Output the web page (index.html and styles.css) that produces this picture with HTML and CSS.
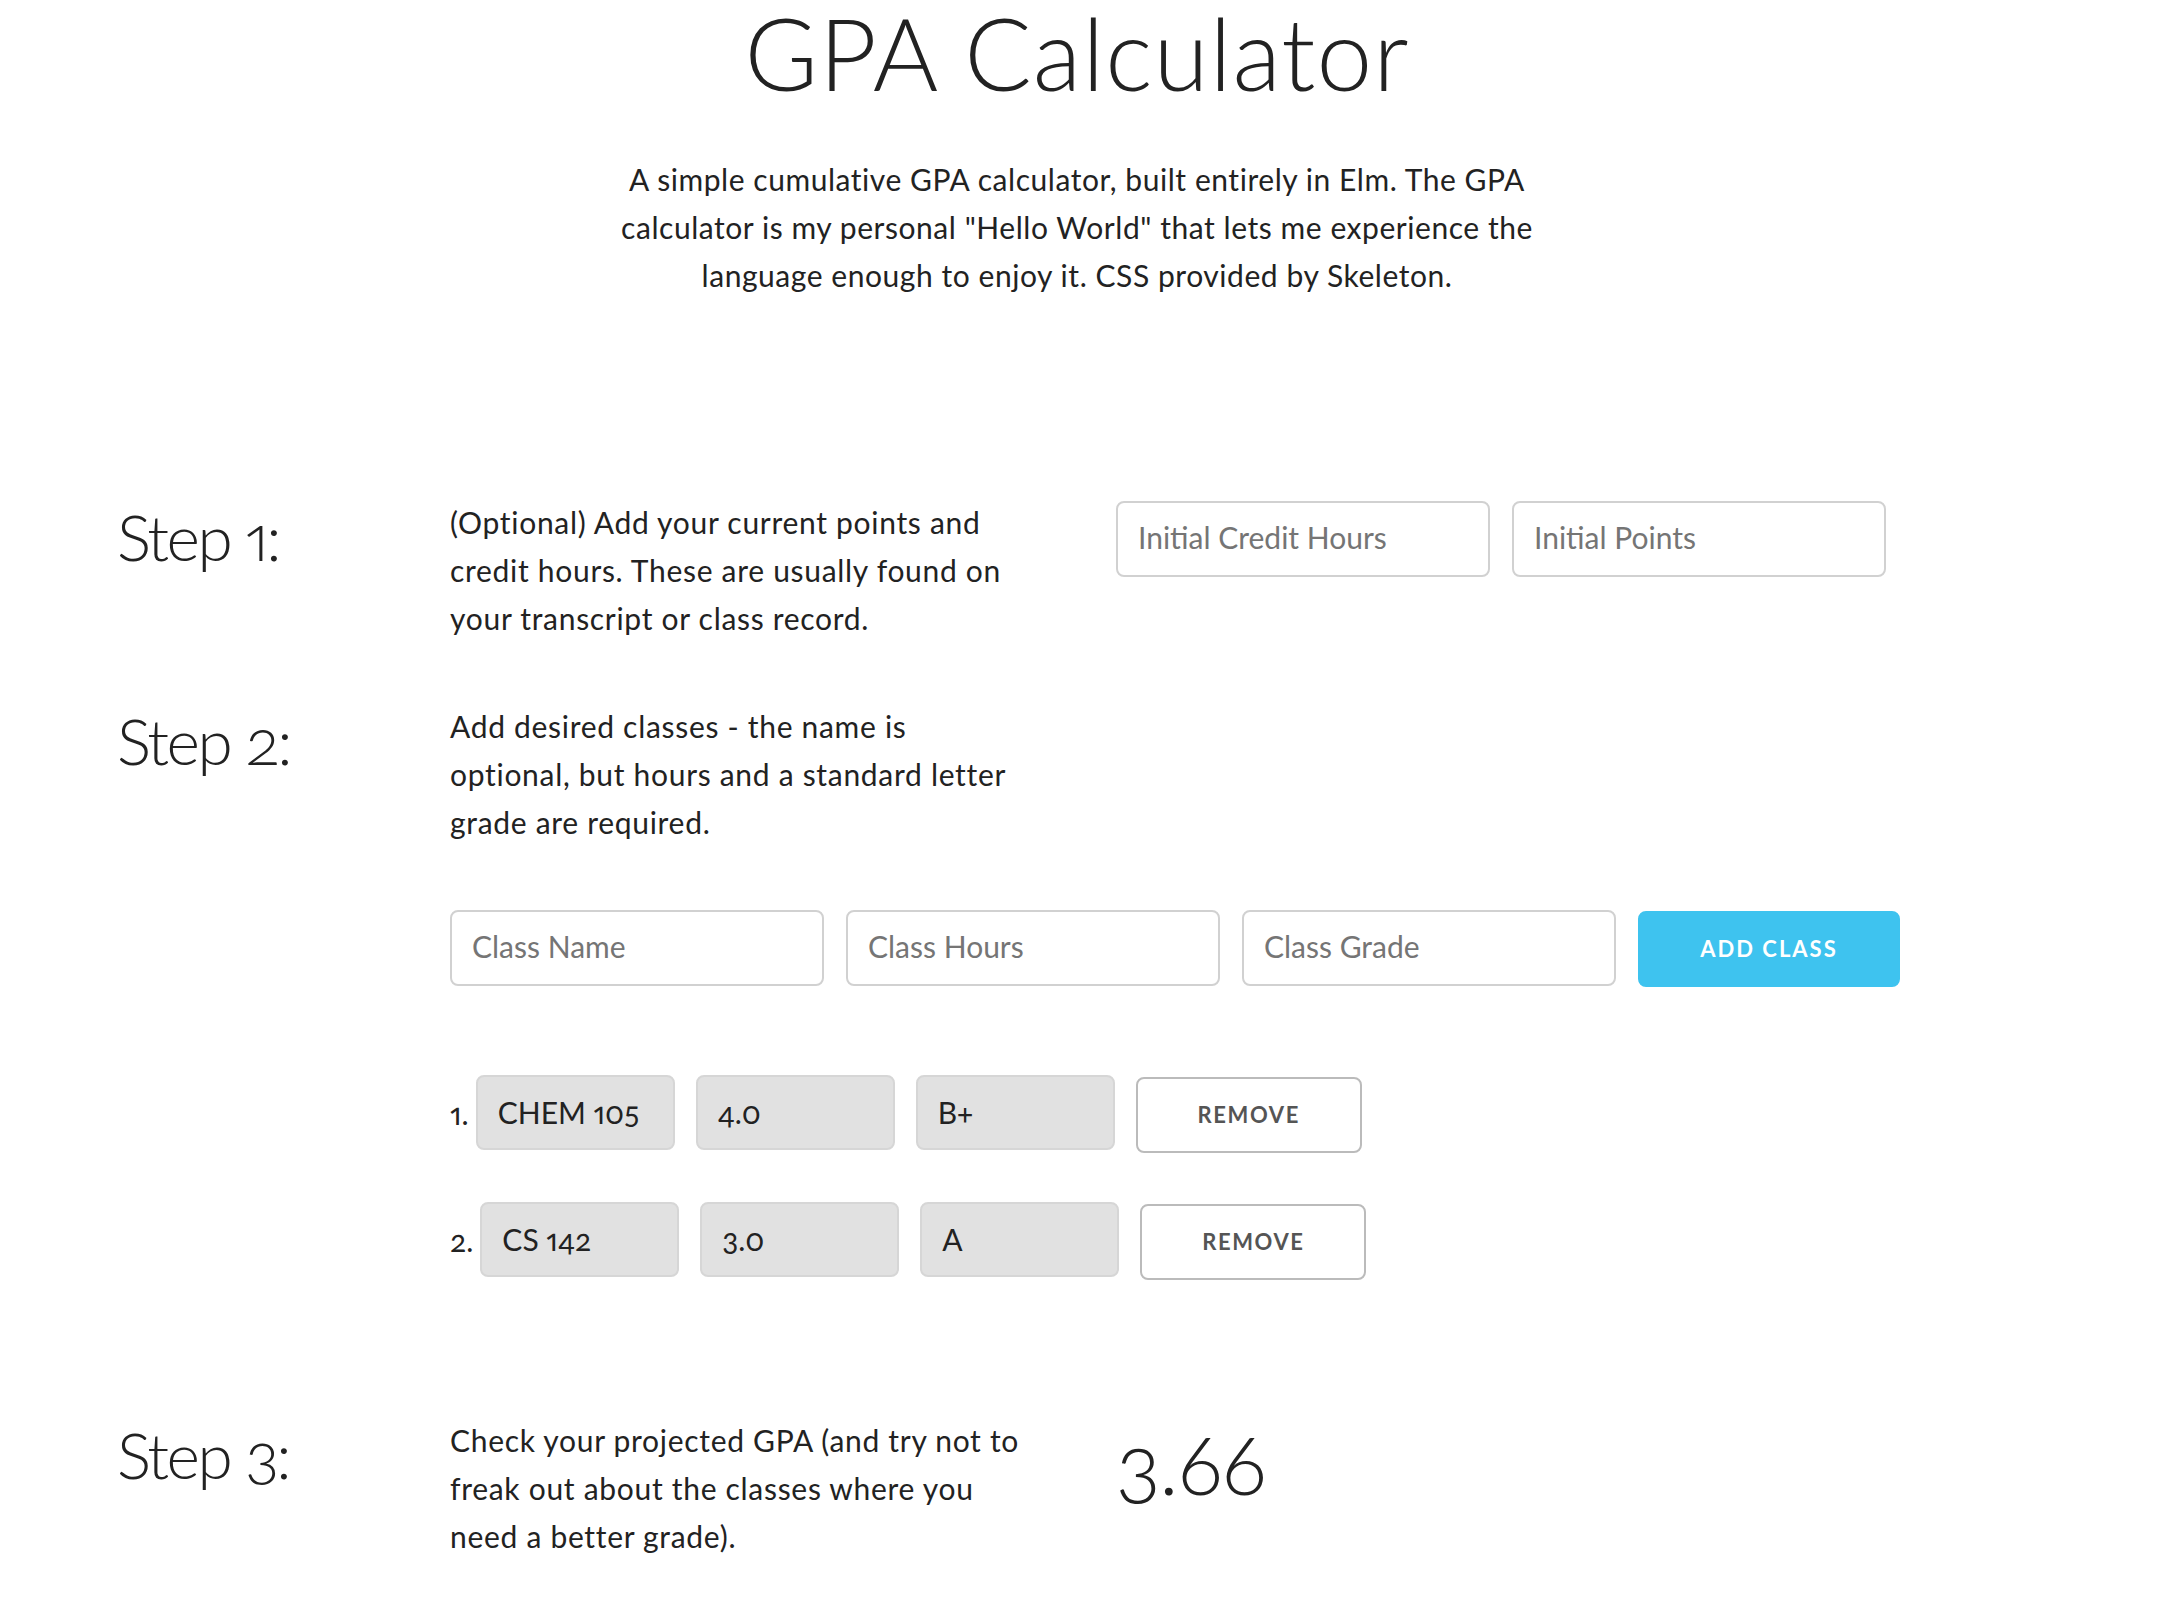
FILE: index.html
```html
<!DOCTYPE html>
<html lang="en">
<head>
<meta charset="utf-8">
<title>GPA Calculator</title>
<link rel="stylesheet" href="styles.css">
</head>
<body>
<div class="page">
  <header class="intro">
    <h1 class="title">GPA Calculator</h1>
    <p class="lead">A simple cumulative GPA calculator, built entirely in Elm. The GPA<br>calculator is my personal "Hello World" that lets me experience the<br>language enough to enjoy it. CSS provided by Skeleton.</p>
  </header>

  <section class="step step-1">
    <h4 class="step-label">Step 1:</h4>
    <p class="step-text">(Optional) Add your current points and<br>credit hours. These are usually found on<br>your transcript or class record.</p>
    <div class="step-aside fields">
      <input class="field" type="text" placeholder="Initial Credit Hours">
      <input class="field" type="text" placeholder="Initial Points">
    </div>
  </section>

  <section class="step step-2">
    <h4 class="step-label">Step 2:</h4>
    <p class="step-text">Add desired classes - the name is<br>optional, but hours and a standard letter<br>grade are required.</p>
  </section>

  <div class="class-form">
    <input class="field" type="text" placeholder="Class Name">
    <input class="field" type="text" placeholder="Class Hours">
    <input class="field" type="text" placeholder="Class Grade">
    <button class="btn btn-primary" type="button">Add Class</button>
  </div>

  <ol class="class-list">
    <li class="class-row">
      <span class="num">1.</span>
      <span class="cell">CHEM 105</span>
      <span class="cell">4.0</span>
      <span class="cell">B+</span>
      <button class="btn btn-remove" type="button">Remove</button>
    </li>
    <li class="class-row">
      <span class="num">2.</span>
      <span class="cell">CS 142</span>
      <span class="cell">3.0</span>
      <span class="cell">A</span>
      <button class="btn btn-remove" type="button">Remove</button>
    </li>
  </ol>

  <section class="step step-3">
    <h4 class="step-label">Step 3:</h4>
    <p class="step-text">Check your projected GPA (and try not to<br>freak out about the classes where you<br>need a better grade).</p>
    <div class="step-aside">
      <div class="gpa">3.66</div>
    </div>
  </section>
</div>
</body>
</html>
```

FILE: styles.css
```css
html, body {
  margin: 0;
  padding: 0;
  background: #fff;
}

body {
  font-family: "Lato", "Liberation Sans", sans-serif;
  font-size: 30px;
  line-height: 48px;
  color: #222;
  font-variant-numeric: oldstyle-nums proportional-nums;
}

.page {
  width: 1920px;
  padding-right: 24px;
  margin: 0 auto;
}

.intro {
  text-align: center;
}

.title {
  margin: 0;
  padding-top: 2px;
  font-size: 100px;
  line-height: 100px;
  font-weight: 300;
  letter-spacing: 1px;
}

.lead {
  margin: 53px 0 0;
  letter-spacing: 0.55px;
}

.step {
  display: grid;
  grid-template-columns: 256px 589px 1fr;
  column-gap: 77px;
  align-items: start;
}

.step-1 { margin-top: 199px; }
.step-2 { margin-top: 60px; }
.step-3 { margin-top: 136px; }

.step-label {
  margin: 0;
  font-size: 64px;
  line-height: 77px;
  font-weight: 300;
  letter-spacing: -2.5px;
  white-space: nowrap;
}

.step-text {
  margin: 0;
  white-space: nowrap;
  letter-spacing: 0.7px;
}

.fields {
  display: flex;
  gap: 22px;
  padding-top: 3px;
}

.field {
  box-sizing: border-box;
  width: 374px;
  height: 76px;
  margin: 0;
  padding: 10px 20px 14px;
  border: 2px solid #d1d1d1;
  border-radius: 8px;
  background: #fff;
  font-family: inherit;
  font-size: 30px;
  color: #222;
  outline: none;
}

.field::placeholder {
  color: #757575;
  opacity: 1;
}

.class-form {
  display: flex;
  gap: 22px;
  margin: 64px 0 0 333px;
}

.btn {
  box-sizing: border-box;
  height: 76px;
  margin: 0;
  padding: 0;
  border: 2px solid #bbb;
  border-radius: 8px;
  background: #fff;
  color: #555;
  font-family: inherit;
  font-size: 22px;
  font-weight: 700;
  line-height: 72px;
  letter-spacing: 2px;
  text-transform: uppercase;
  text-align: center;
}

.btn-primary {
  width: 262px;
  margin-top: 1px;
  background: #3ec3ef;
  border-color: #3ec3ef;
  color: #fff;
}

.btn-remove {
  width: 226px;
  margin-top: 2px;
  letter-spacing: 1.6px;
}

.class-list {
  list-style: none;
  margin: 88px 0 0 333px;
  padding: 0;
}

.class-row {
  display: flex;
  align-items: flex-start;
  gap: 21px;
}

.class-row + .class-row {
  margin-top: 49px;
}

.num {
  line-height: 76px;
  margin-right: -14px;
}

.cell {
  box-sizing: border-box;
  width: 199px;
  height: 75px;
  padding: 0 20px;
  border: 2px solid #d6d6d6;
  border-radius: 8px;
  background: #e1e1e1;
  line-height: 71px;
  color: #222;
}

.gpa {
  margin-top: 5px;
  font-size: 84px;
  line-height: 84px;
  font-weight: 300;
  letter-spacing: -1px;
}
```
